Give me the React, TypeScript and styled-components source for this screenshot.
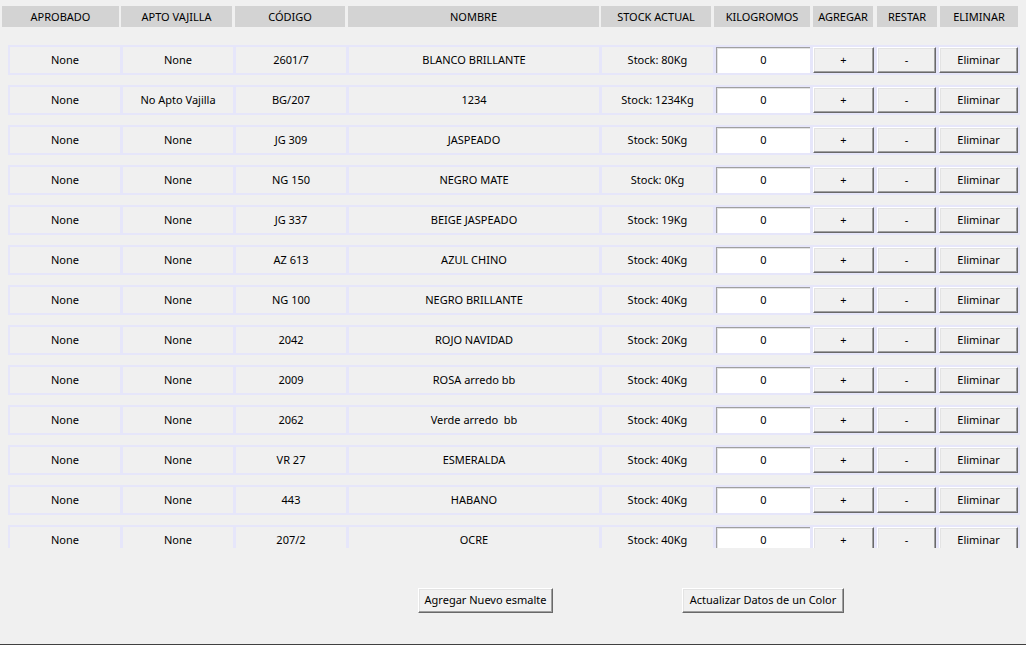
import React from "react";
import styled, { createGlobalStyle } from "styled-components";

const Global = createGlobalStyle`
  html, body { margin: 0; padding: 0; background: #f0f0f0; }
  body { font-family: "Noto Sans", "Open Sans", sans-serif; font-size: 11px; color: #000; }
  * { box-sizing: border-box; }
`;

const Window = styled.div`
  width: 1026px;
  height: 645px;
  background: #f0f0f0;
  display: flex;
  flex-direction: column;
  border-bottom: 1px solid #404040;
`;

const HeaderBar = styled.div`
  display: flex;
  margin-top: 6px;
  height: 21px;
`;

const HeaderCell = styled.div<{ $x: number; $w: number }>`
  margin-left: ${(p) => p.$x}px;
  width: ${(p) => p.$w}px;
  background: #d3d3d3;
  display: flex;
  align-items: center;
  justify-content: center;
  white-space: nowrap;
`;

const ListViewport = styled.div`
  height: 521px;
  padding: 18px 0 0 8px;
  overflow: hidden;
`;

const Row = styled.div`
  display: flex;
  width: 1012px;
  height: 30px;
  padding: 2px;
  gap: 3px;
  background: #e6e6fa;
  margin-bottom: 10px;
`;

const Cell = styled.div<{ $w: number }>`
  width: ${(p) => p.$w}px;
  flex: none;
  background: #f0f0f0;
  display: flex;
  align-items: center;
  justify-content: center;
  white-space: nowrap;
  padding-bottom: 1px;
`;

const Entry = styled.div<{ $w: number }>`
  width: ${(p) => p.$w}px;
  flex: none;
  background: #fff;
  border-top: 1px solid #a0a0a0;
  border-left: 1px solid #a0a0a0;
  box-shadow: inset 1px 1px 0 #e3e3e3;
  display: flex;
  align-items: center;
  justify-content: center;
  padding-bottom: 2px;
`;

const Button = styled.button<{ $w: number }>`
  width: ${(p) => p.$w}px;
  flex: none;
  font: inherit;
  color: #000;
  background: #f0f0f0;
  padding: 0 0 2px 0;
  border: 1px solid;
  border-color: #ffffff #696969 #696969 #ffffff;
  box-shadow: inset -1px -1px 0 #a0a0a0, inset 1px 1px 0 #e3e3e3;
  display: flex;
  align-items: center;
  justify-content: center;
  white-space: nowrap;
`;

const Footer = styled.div`
  display: flex;
  gap: 129px;
  padding-left: 418px;
  margin-top: 40px;
`;

const FooterButton = styled(Button)`
  height: 25px;
`;

const headers: [string, number, number][] = [
  ["APROBADO", 2, 117],
  ["APTO VAJILLA", 2, 111],
  ["CÓDIGO", 3, 110],
  ["NOMBRE", 3, 251],
  ["STOCK ACTUAL", 2, 110],
  ["KILOGROMOS", 3, 96],
  ["AGREGAR", 3, 60],
  ["RESTAR", 4, 60],
  ["ELIMINAR", 3, 78],
];

const rows: [string, string, string, string, string][] = [
  ["None", "None", "2601/7", "BLANCO BRILLANTE", "Stock: 80Kg"],
  ["None", "No Apto Vajilla", "BG/207", "1234", "Stock: 1234Kg"],
  ["None", "None", "JG 309", "JASPEADO", "Stock: 50Kg"],
  ["None", "None", "NG 150", "NEGRO MATE", "Stock: 0Kg"],
  ["None", "None", "JG 337", "BEIGE JASPEADO", "Stock: 19Kg"],
  ["None", "None", "AZ 613", "AZUL CHINO", "Stock: 40Kg"],
  ["None", "None", "NG 100", "NEGRO BRILLANTE", "Stock: 40Kg"],
  ["None", "None", "2042", "ROJO NAVIDAD", "Stock: 20Kg"],
  ["None", "None", "2009", "ROSA arredo bb", "Stock: 40Kg"],
  ["None", "None", "2062", "Verde arredo\u00a0 bb", "Stock: 40Kg"],
  ["None", "None", "VR 27", "ESMERALDA", "Stock: 40Kg"],
  ["None", "None", "443", "HABANO", "Stock: 40Kg"],
  ["None", "None", "207/2", "OCRE", "Stock: 40Kg"],
];

export default function App() {
  return (
    <>
      <Global />
      <Window>
        <HeaderBar>
          {headers.map(([t, x, w]) => (
            <HeaderCell key={t} $x={x} $w={w}>
              {t}
            </HeaderCell>
          ))}
        </HeaderBar>
        <ListViewport>
          {rows.map((r, i) => (
            <Row key={i}>
              <Cell $w={110}>{r[0]}</Cell>
              <Cell $w={110}>{r[1]}</Cell>
              <Cell $w={110}>{r[2]}</Cell>
              <Cell $w={250}>{r[3]}</Cell>
              <Cell $w={111}>{r[4]}</Cell>
              <Entry $w={94}>0</Entry>
              <Button $w={61}>+</Button>
              <Button $w={59}>-</Button>
              <Button $w={79}>Eliminar</Button>
            </Row>
          ))}
        </ListViewport>
        <Footer>
          <FooterButton $w={135}>Agregar Nuevo esmalte</FooterButton>
          <FooterButton $w={162}>Actualizar Datos de un Color</FooterButton>
        </Footer>
      </Window>
    </>
  );
}
